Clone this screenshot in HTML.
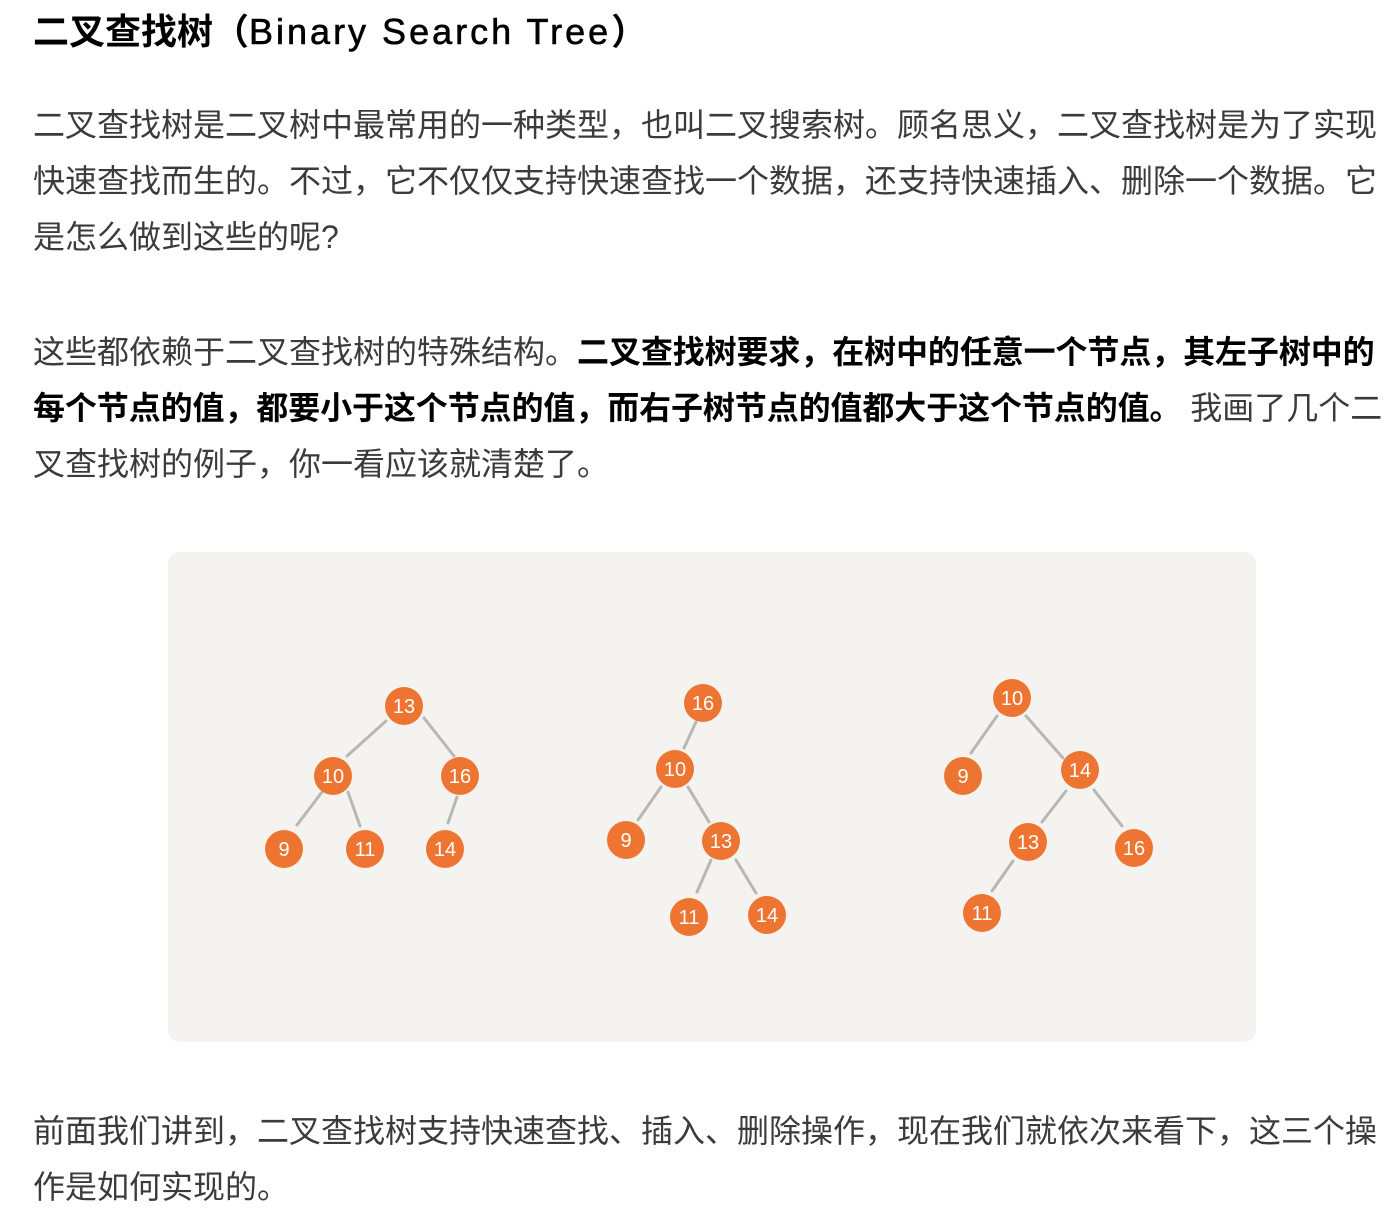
<!DOCTYPE html>
<html><head><meta charset="utf-8"><style>
body{margin:0;background:#fff;width:1400px;height:1216px;overflow:hidden;position:relative;font-family:"Liberation Sans","Noto Sans CJK SC",sans-serif}
.l{position:absolute;left:33px;white-space:nowrap;font-size:32px;line-height:40px;color:#3b3b3b;letter-spacing:0px}
.l b{color:#000;font-weight:bold;letter-spacing:-0.1px}
h1{position:absolute;left:33px;top:10px;margin:0;font-size:36px;line-height:44px;font-weight:bold;color:#000;white-space:nowrap}
h1 span{letter-spacing:3px;font-weight:normal;-webkit-text-stroke:0.6px #000}
.box{position:absolute;left:168px;top:552px;width:1088px;height:490px;background:#f4f3ef;border-radius:12px}
</style></head><body>
<h1>二叉查找树（<span>Binary Search Tree</span>）</h1>
<div class="l" style="top:105px">二叉查找树是二叉树中最常用的一种类型，也叫二叉搜索树。顾名思义，二叉查找树是为了实现</div>
<div class="l" style="top:161px">快速查找而生的。不过，它不仅仅支持快速查找一个数据，还支持快速插入、删除一个数据。它</div>
<div class="l" style="top:217px">是怎么做到这些的呢?</div>
<div class="l" style="top:332px">这些都依赖于二叉查找树的特殊结构。<b>二叉查找树要求，在树中的任意一个节点，其左子树中的</b></div>
<div class="l" style="top:388px"><b>每个节点的值，都要小于这个节点的值，而右子树节点的值都大于这个节点的值。</b> 我画了几个二</div>
<div class="l" style="top:444px">叉查找树的例子，你一看应该就清楚了。</div>
<div class="box"></div>
<svg style="position:absolute;left:0;top:0" width="1400" height="1216">
<g stroke="#b8b8b2" stroke-width="3" stroke-linecap="round">
<line x1="386" y1="721" x2="347" y2="756"/><line x1="424" y1="718" x2="454" y2="756"/>
<line x1="322" y1="792" x2="297" y2="825"/><line x1="348" y1="792" x2="360" y2="826"/><line x1="457" y1="797" x2="448" y2="823"/>
<line x1="696" y1="722" x2="684" y2="748"/><line x1="661" y1="787" x2="638" y2="820"/><line x1="688" y1="787" x2="709" y2="822"/>
<line x1="711" y1="860" x2="697" y2="892"/><line x1="736" y1="860" x2="756" y2="893"/>
<line x1="997" y1="716" x2="971" y2="753"/><line x1="1026" y1="716" x2="1063" y2="758"/>
<line x1="1066" y1="791" x2="1042" y2="822"/><line x1="1094" y1="790" x2="1122" y2="826"/><line x1="1013" y1="861" x2="992" y2="891"/>
</g>
<g fill="#ee7431">
<circle cx="404" cy="706" r="19"/><circle cx="333" cy="776" r="19"/><circle cx="460" cy="776" r="19"/><circle cx="284" cy="849" r="19"/><circle cx="365" cy="849" r="19"/><circle cx="445" cy="849" r="19"/>
<circle cx="703" cy="703" r="19"/><circle cx="675" cy="769" r="19"/><circle cx="626" cy="840" r="19"/><circle cx="721" cy="841" r="19"/><circle cx="689" cy="917" r="19"/><circle cx="767" cy="915" r="19"/>
<circle cx="1012" cy="698" r="19"/><circle cx="963" cy="776" r="19"/><circle cx="1080" cy="770" r="19"/><circle cx="1028" cy="842" r="19"/><circle cx="1134" cy="848" r="19"/><circle cx="982" cy="913" r="19"/>
</g>
<g fill="#fff" font-family="Liberation Sans, sans-serif" font-size="20" text-anchor="middle">
<text x="404" y="713">13</text><text x="333" y="783">10</text><text x="460" y="783">16</text><text x="284" y="856">9</text><text x="365" y="856">11</text><text x="445" y="856">14</text>
<text x="703" y="710">16</text><text x="675" y="776">10</text><text x="626" y="847">9</text><text x="721" y="848">13</text><text x="689" y="924">11</text><text x="767" y="922">14</text>
<text x="1012" y="705">10</text><text x="963" y="783">9</text><text x="1080" y="777">14</text><text x="1028" y="849">13</text><text x="1134" y="855">16</text><text x="982" y="920">11</text>
</g>
</svg>
<div class="l" style="top:1111px">前面我们讲到，二叉查找树支持快速查找、插入、删除操作，现在我们就依次来看下，这三个操</div>
<div class="l" style="top:1167px">作是如何实现的。</div>
</body></html>
